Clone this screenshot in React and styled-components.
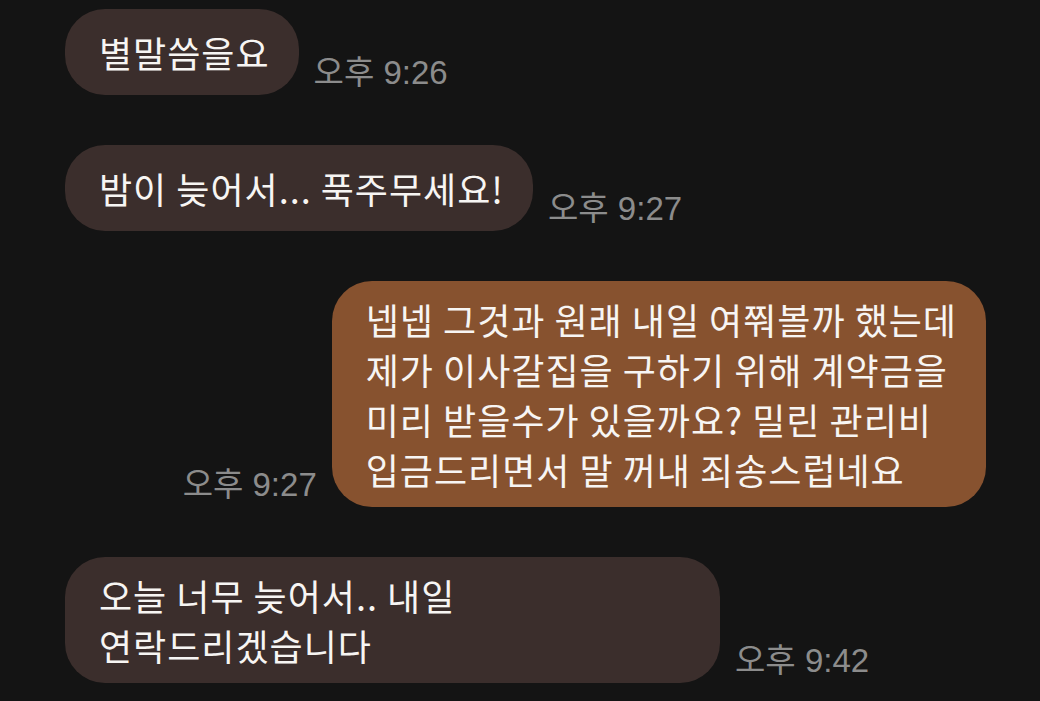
import React from "react";
import styled, { createGlobalStyle } from "styled-components";

const GlobalStyle = createGlobalStyle`
	html, body {
		margin: 0;
		padding: 0;
		background: #141414;
	}
	body {
		font-family: "Noto Sans CJK KR", "Noto Sans", sans-serif;
	}
`;

const messages = [
	{ id: 1, mine: false, time: "오후 9:26", lines: ["별말씀을요"] },
	{ id: 2, mine: false, time: "오후 9:27", lines: ["밤이 늦어서... 푹주무세요!"] },
	{
		id: 3,
		mine: true,
		time: "오후 9:27",
		lines: [
			"넵넵 그것과 원래 내일 여쭤볼까 했는데",
			"제가 이사갈집을 구하기 위해 계약금을",
			"미리 받을수가 있을까요? 밀린 관리비",
			"입금드리면서 말 꺼내 죄송스럽네요",
		],
	},
	{
		id: 4,
		mine: false,
		time: "오후 9:42",
		lines: ["오늘 너무 늦어서.. 내일", "연락드리겠습니다"],
		wide: true,
	},
];

function App() {
	return (
		<>
			<GlobalStyle />
			<Chat>
				{messages.map((m) => (
					<Row key={m.id} $mine={m.mine}>
						{m.mine && <Time>{m.time}</Time>}
						<Bubble $mine={m.mine} $wide={m.wide}>
							{m.lines.map((l, i) => (
								<Line key={i}>{l}</Line>
							))}
						</Bubble>
						{!m.mine && <Time>{m.time}</Time>}
					</Row>
				))}
			</Chat>
		</>
	);
}

export default App;

const Chat = styled.div`
	display: flex;
	flex-direction: column;
	gap: 50px;
	padding: 9px 54px 0 65px;
	height: 701px;
	box-sizing: border-box;
	overflow: hidden;
`;
const Row = styled.div`
	display: flex;
	align-items: flex-end;
	justify-content: ${(p) => (p.$mine ? "flex-end" : "flex-start")};
	gap: 15px;
`;
const Bubble = styled.div`
	display: flex;
	flex-direction: column;
	justify-content: center;
	box-sizing: border-box;
	min-height: 86px;
	min-width: ${(p) => (p.$wide ? "655px" : "0")};
	padding: 13px 29px 13px 34px;
	border-radius: 40px;
	background: ${(p) => (p.$mine ? "#87522f" : "#3b2e2c")};
	color: #f7f5f3;
	font-size: 36px;
	line-height: 50px;
	letter-spacing: 1px;
`;
const Line = styled.div`
	white-space: nowrap;
`;
const Time = styled.div`
	font-family: "Liberation Sans", "Noto Sans CJK KR", sans-serif;
	font-size: 33px;
	line-height: 33px;
	color: #8c8c8c;
	padding-bottom: 6px;
	white-space: nowrap;
`;
